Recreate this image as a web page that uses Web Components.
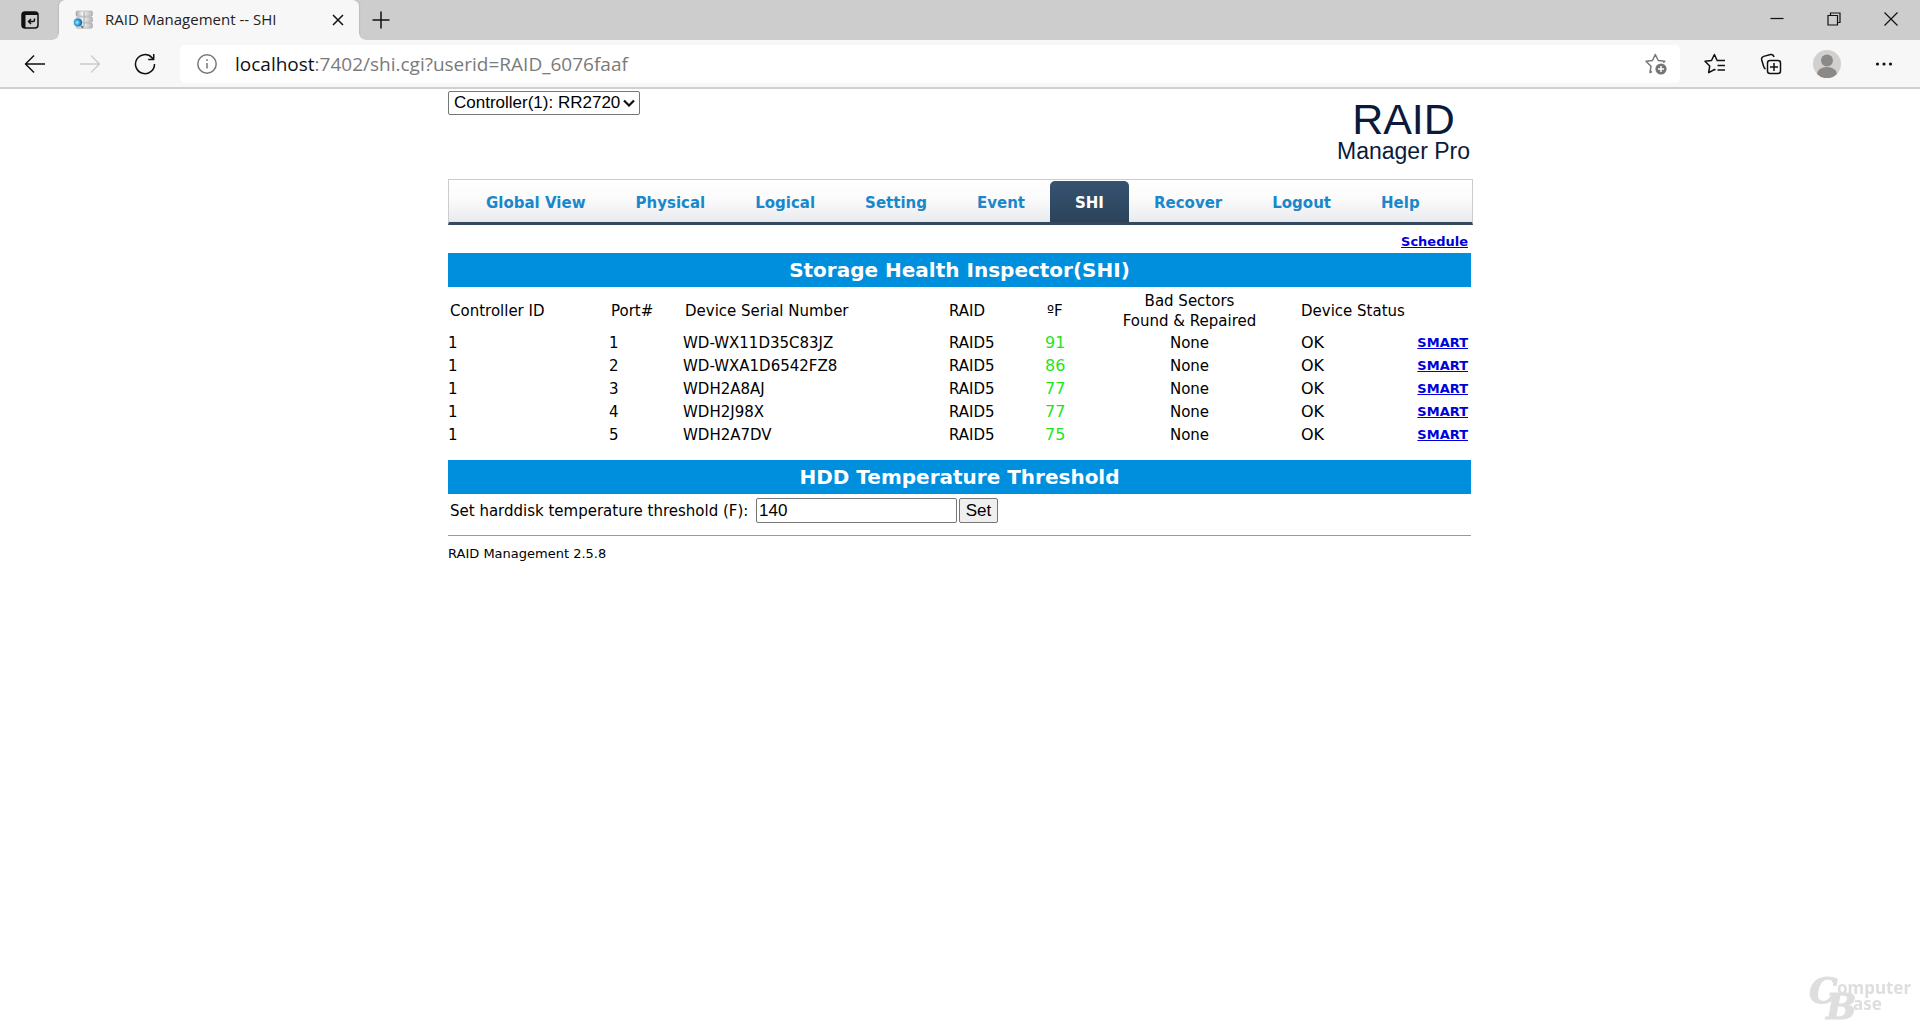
<!DOCTYPE html>
<html lang="en">
<head>
<meta charset="utf-8">
<title>RAID Management -- SHI</title>
<style>
  html, body { margin: 0; min-height: 100%; background: #fff; color: #000; }
  body { font-family: Verdana, "DejaVu Sans", sans-serif; font-size: 15px; }
</style>
</head>
<body>
<browser-tabs>RAID Management -- SHI</browser-tabs>
<browser-toolbar><span slot="host">localhost</span><span slot="path">:7402/shi.cgi?userid=RAID_6076faaf</span></browser-toolbar>
<raid-page>
  <raid-header></raid-header>
  <raid-nav current="SHI"></raid-nav>
  <section-banner>Storage Health Inspector(SHI)</section-banner>
  <device-table></device-table>
  <section-banner>HDD Temperature Threshold</section-banner>
  <threshold-form></threshold-form>
  <page-footer>RAID Management 2.5.8</page-footer>
</raid-page>
<site-watermark></site-watermark>

<script>
function define(name, markup) {
  customElements.define(name, class extends HTMLElement {
    connectedCallback() {
      if (this.shadowRoot) return;
      const html = typeof markup === 'function' ? markup(this) : markup;
      this.attachShadow({ mode: 'open' }).innerHTML = html;
    }
  });
}

define('browser-tabs', `
<style>
  :host { display: flex; height: 40px; padding-right: 1px; background: #cdcdcd; font: 15px/20px "Segoe UI", "Open Sans", sans-serif; }
  button { border: 0; padding: 0; background: none; display: flex; align-items: center; justify-content: center; }
  svg { display: block; fill: none; stroke: #111; stroke-width: 1.5; }
  .actions { width: 59px; }
  .tab { position: relative; box-sizing: border-box; width: 300px; display: flex; align-items: center; gap: 12px; padding: 0 12px 0 14px; background: #f7f7f7; border-radius: 6px 6px 0 0; box-shadow: 0 0 2px #999; clip-path: inset(0 -8px 0 -8px); }
  .tab::before, .tab::after { content: ""; position: absolute; bottom: 0; width: 6px; height: 6px; }
  .tab::before { right: 100%; background: radial-gradient(circle at 0 0, transparent 5px, #f7f7f7 6px); }
  .tab::after { left: 100%; background: radial-gradient(circle at 100% 0, transparent 5px, #f7f7f7 6px); }
  .title { flex: 1; padding-bottom: 2px; white-space: nowrap; color: #222; font-size: 15px; }
  .close { width: 18px; height: 18px; }
  .new { width: 43px; padding-bottom: 1px; }
  .window { margin-left: auto; display: flex; }
  .window button { width: 57px; padding-bottom: 3px; }
  .window svg { stroke-width: 1.2; }
</style>
<button class="actions" aria-label="Tab actions"><svg width="20" height="20" viewBox="0 0 20 20"><rect x="2" y="2" width="16" height="16" rx="3"/><path d="M2 4.500a2.500 2.500 0 0 1 2.500-2.500h11a2.500 2.500 0 0 1 2.500 2.500v.5H5.500V18H4.500A2.500 2.500 0 0 1 2 15.500z" fill="#111" stroke="none"/><path d="M14.500 8.500v1.500q0 1.500-1.500 1.500H8.500M11 9 8.500 11.500l2.500 2.500"/></svg></button>
<div class="tab">
  <svg width="20" height="20" viewBox="0 0 20 20" aria-hidden="true">
    <defs><linearGradient id="m"><stop offset="0" stop-color="#aaa"/><stop offset=".4" stop-color="#f6f6f6"/><stop offset="1" stop-color="#b4b4b4"/></linearGradient><radialGradient id="b" cx=".4" cy=".5"><stop offset="0" stop-color="#a5e6ff"/><stop offset=".6" stop-color="#2a9fdc"/><stop offset="1" stop-color="#1263a0"/></radialGradient></defs>
    <g fill="url(#m)" stroke="#999" stroke-width=".5"><rect x="3" y="1" width="16.500" height="5.200" rx="1.500"/><rect x="3" y="7" width="16.500" height="5.200" rx="1.500"/><rect x="3" y="13" width="16.500" height="5.200" rx="1.500"/></g>
    <path d="M11 1.500v16" stroke="#a8a8a8" stroke-width="1"/>
    <circle cx="5" cy="12.500" r="4.600" fill="url(#b)" stroke="#dfe8ef" stroke-width="1"/><path d="M8.300 15.800l1.700 2" stroke="#777" stroke-width="2"/>
  </svg>
  <span class="title"><slot></slot></span>
  <button class="close" aria-label="Close tab"><svg width="12" height="12" viewBox="0 0 12 12"><path d="M1 1l10 10M11 1 1 11"/></svg></button>
</div>
<button class="new" aria-label="New tab"><svg width="18" height="18" viewBox="0 0 18 18"><path d="M9 .5v17M.5 9h17"/></svg></button>
<div class="window">
  <button aria-label="Minimize"><svg width="14" height="14" viewBox="0 0 14 14"><path d="M.5 6.500h13"/></svg></button>
  <button aria-label="Restore"><svg width="14" height="14" viewBox="0 0 14 14"><path d="M1 3.500h9.500V13H1zM3.500 3.500V1H13v9.500h-2.500"/></svg></button>
  <button aria-label="Close window"><svg width="14" height="14" viewBox="0 0 14 14"><path d="M.5.500l13 13M13.500.5l-13 13"/></svg></button>
</div>`);

define('browser-toolbar', `
<style>
  :host { display: flex; align-items: center; box-sizing: border-box; height: 49px; padding: 0 7px; background: #f7f7f7; border-bottom: 2px solid #d0d0d0; }
  button { border: 0; padding: 0; background: none; display: flex; align-items: center; justify-content: center; width: 55px; height: 38px; }
  svg { display: block; fill: none; stroke: #111; stroke-width: 1.5; stroke-linejoin: round; }
  .off svg { stroke: #ccc; }
  .address { flex: 1; margin-left: 8px; height: 38px; display: flex; align-items: center; background: #fff; border-radius: 5px; }
  .address button { width: 40px; }
  .address button:first-child { margin-left: 7px; }
  .address button:last-child { margin-right: 4px; }
  .address svg { stroke: #777; }
  .url { flex: 1; margin-left: 8px; white-space: nowrap; color: #7a7a7a; font: 19px/26px "Segoe UI", "Open Sans", sans-serif; outline: none; }
  .url ::slotted([slot=host]) { color: #111; }
  .tools { display: flex; margin-left: 7px; }
  .tools button { width: 56px; }
  .tools button:last-child { width: 58px; }
</style>
<button aria-label="Back"><svg width="22" height="20" viewBox="0 0 22 20"><path d="M21 10H2M10 1.500 1.500 10l8.500 8.500"/></svg></button>
<button class="off" aria-label="Forward"><svg width="22" height="20" viewBox="0 0 22 20"><path d="M1 10h19M12 1.500l8.500 8.500-8.500 8.500"/></svg></button>
<button aria-label="Refresh"><svg width="22" height="22" viewBox="0 0 22 22"><path d="M20.500 11a9.500 9.500 0 1 1-2.500-6.300l1.500 1.600M19.700 1v5.500h-5.500"/></svg></button>
<div class="address">
  <button aria-label="Site information"><svg width="20" height="20" viewBox="0 0 20 20"><circle cx="10" cy="10" r="9.200"/><path d="M10 9v5.500M10 5.200v1.800"/></svg></button>
  <div class="url" role="textbox" aria-label="Address" contenteditable="true" spellcheck="false"><slot name="host"></slot><slot name="path"></slot></div>
  <button aria-label="Add to favorites"><svg width="24" height="22" viewBox="0 0 24 22"><path d="M8 18.500 6 19.600l1-6.400L2 8.300l6.500-.8 2.800-6 3 6 6.500.8-1.500 1.400"/><circle cx="17" cy="16" r="5.600" fill="#757575" stroke="none"/><path d="M17 13v6M14 16h6" stroke="#fff"/></svg></button>
</div>
<div class="tools">
  <button aria-label="Favorites"><svg width="22" height="22" viewBox="0 0 22 22"><path d="M11.500 17 10.500 16.500 4.700 19.700l1-6.600L1 8.300l6.500-.8 2.900-6 2.600 5.800M12.500 7.500h8.500M13.500 12.500h7.500M13.500 17h7.500"/></svg></button>
  <button aria-label="Collections"><svg width="22" height="22" viewBox="0 0 22 22"><path d="M5.500 16Q4.200 15.300 3.600 13.300L1.700 7Q1 4.200 3.700 3.400L10.500 1.500Q13.200 1 14 4"/><rect x="7.500" y="7.500" width="13" height="13" rx="2.500"/><path d="M14 10v8M10 14h8"/></svg></button>
  <button aria-label="Profile"><svg width="28" height="28" viewBox="0 0 28 28"><circle cx="14" cy="14" r="14" fill="#d2d0ce" stroke="none"/><circle cx="14" cy="10.500" r="6" fill="#8b8886" stroke="none"/><path d="M4 24a10 7 0 0 1 20 0 14 14 0 0 1-20 0" fill="#8b8886" stroke="none"/></svg></button>
  <button aria-label="Settings and more"><svg width="18" height="4" viewBox="0 0 18 4"><g fill="#111" stroke="none"><circle cx="2.500" cy="2" r="1.600"/><circle cx="9" cy="2" r="1.600"/><circle cx="15.500" cy="2" r="1.600"/></g></svg></button>
</div>`);

define('raid-page', `
<style>
  :host { display: block; box-sizing: border-box; max-width: 1024px; margin: 0 auto; padding: 2px 1px 0 0; }
</style>
<slot></slot>`);

define('raid-header', `
<style>
  :host { display: flex; justify-content: space-between; align-items: flex-start; height: 88px; }
  .pick { display: grid; width: 192px; }
  .pick > * { grid-area: 1 / 1; }
  select { appearance: none; box-sizing: border-box; height: 24px; padding: 0 0 0 5px; border: 1px solid #767676; border-radius: 2px; background: #fff; color: #000; font: 17px/20px Arial, "Liberation Sans", sans-serif; }
  svg { justify-self: end; align-self: center; margin-right: 5px; pointer-events: none; fill: none; stroke: #111; stroke-width: 2.200; }
  .logo { display: flex; flex-direction: column; align-items: center; margin: 8px 1px 0 0; color: #0b1a3a; font-family: Arial, "Liberation Sans", sans-serif; }
  .big { font-size: 43px; line-height: 40px; }
  .small { font-size: 23px; line-height: 24px; }
</style>
<div class="pick">
  <select aria-label="Controller"><option>Controller(1): RR2720</option></select>
  <svg width="12" height="8" viewBox="0 0 12 8"><path d="M1 1.500l5 5 5-5"/></svg>
</div>
<div class="logo"><span class="big">RAID</span><span class="small">Manager Pro</span></div>`);

define('raid-nav', host => {
  const items = ['Global View', 'Physical', 'Logical', 'Setting', 'Event', 'SHI', 'Recover', 'Logout', 'Help'];
  const current = host.getAttribute('current');
  return `
<style>
  :host { display: block; }
  nav { display: flex; box-sizing: border-box; height: 46px; margin-right: -2px; padding: 1px 0 0 12px; border: solid #ccc; border-width: 1px 1px 0; border-bottom: 3px solid #34495e; background: linear-gradient(#fff, #fbfbfc 45%, #ebecef 94%, #dfe6ee); }
  nav a { display: flex; align-items: center; padding: 2px 25px 0; color: #1a87cb; font-size: 15px; line-height: 20px; font-weight: bold; text-decoration: none; white-space: nowrap; }
  nav a[aria-current] { color: #fff; background: linear-gradient(#365370, #2c435b); border-radius: 5px 5px 0 0; }
  .sub { display: flex; justify-content: flex-end; padding: 9px 3px 3px 0; }
  .sub a { color: #0000d8; font-size: 13px; line-height: 16px; font-weight: bold; }
</style>
<nav>${items.map(t => `<a href="#"${t === current ? ' aria-current="page"' : ''}>${t}</a>`).join('')}</nav>
<div class="sub"><a href="#">Schedule</a></div>`;
});

define('section-banner', `
<style>
  :host { display: block; background: #008fdd; }
  h2 { margin: 0; color: #fff; font-size: 20px; line-height: 34px; font-weight: bold; text-align: center; }
</style>
<h2><slot></slot></h2>`);

define('device-table', () => {
  const rows = [
    [1, 'WD-WX11D35C83JZ', 91],
    [2, 'WD-WXA1D6542FZ8', 86],
    [3, 'WDH2A8AJ', 77],
    [4, 'WDH2J98X', 77],
    [5, 'WDH2A7DV', 75]
  ];
  return `
<style>
  :host { display: block; padding: 4px 0 14px; }
  table { width: 100%; border-collapse: collapse; table-layout: fixed; font-size: 15px; line-height: 20px; }
  th, td { padding: 0; text-align: left; font-weight: normal; white-space: nowrap; }
  th { height: 40px; }
  td { height: 23px; }
  .in { padding-left: 2px; }
  .mid { text-align: center; }
  .temp { color: #1fe51f; font-size: 16px; }
  .ok { font-size: 16px; }
  .end { text-align: right; padding-right: 3px; }
  a { color: #0000d8; font-size: 13px; font-weight: bold; }
</style>
<table>
  <colgroup><col style="width:161px"><col style="width:74px"><col style="width:266px"><col style="width:96px"><col style="width:33px"><col style="width:223px"><col style="width:107px"><col></colgroup>
  <thead><tr><th class="in">Controller ID</th><th class="in">Port#</th><th class="in">Device Serial Number</th><th>RAID</th><th class="in">ºF</th><th class="mid">Bad Sectors<br>Found &amp; Repaired</th><th>Device Status</th><th></th></tr></thead>
  <tbody>${rows.map(([port, serial, temp]) => `<tr><td>1</td><td>${port}</td><td>${serial}</td><td>RAID5</td><td class="temp">${temp}</td><td class="mid">None</td><td class="ok">OK</td><td class="end"><a href="#">SMART</a></td></tr>`).join('')}</tbody>
</table>`;
});

define('threshold-form', `
<style>
  :host { display: block; padding: 4px 0 12px 2px; border-bottom: 1px solid #9a9a9a; }
  form { display: flex; align-items: center; gap: 2px; }
  label { min-width: 304px; font-size: 15px; line-height: 20px; white-space: nowrap; }
  input, button { box-sizing: border-box; height: 25px; border: 1px solid #767676; border-radius: 2px; color: #000; font: 17px/20px Arial, "Liberation Sans", sans-serif; }
  input { width: 201px; padding: 0 2px; background: #fff; }
  button { width: 39px; padding: 0; background: #efefef; }
</style>
<form onsubmit="return false">
  <label for="t">Set harddisk temperature threshold (F):</label>
  <input id="t" type="text" value="140">
  <button type="submit">Set</button>
</form>`);

define('page-footer', `
<style>
  :host { display: block; padding-top: 9px; font-size: 13px; line-height: 18px; }
</style>
<slot></slot>`);

define('site-watermark', `
<style>
  :host { position: fixed; right: 4px; bottom: 4px; pointer-events: none; }
  svg { display: block; }
  .cap { font: italic bold 36px "DejaVu Serif", serif; stroke: #dedede; stroke-width: 1px; }
  .word { font: bold 17px "Noto Sans", "Open Sans", sans-serif; }
</style>
<svg width="110" height="60" viewBox="-4 -8 110 60" overflow="visible" fill="#dedede">
  <text class="word" x="27" y="20">omputer</text>
  <text class="word" x="43" y="36">ase</text>
  <text class="cap" x="-1" y="29">C</text>
  <text class="cap" x="16" y="45">B</text>
</svg>`);
</script>
</body>
</html>
